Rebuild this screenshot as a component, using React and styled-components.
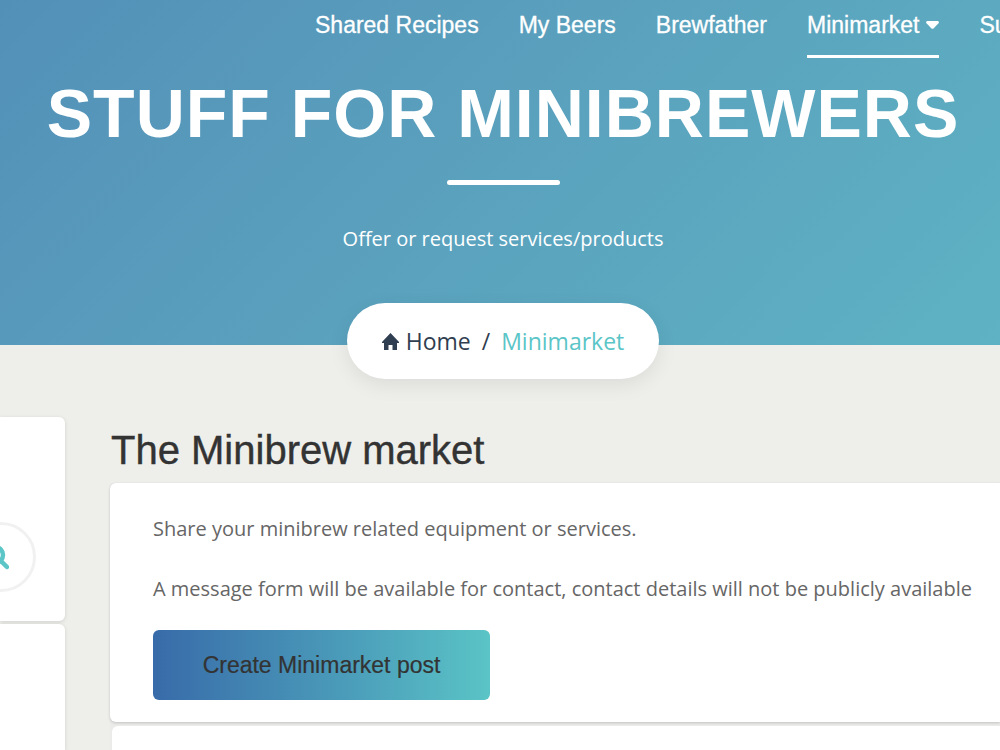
import React from 'react';
import styled, { createGlobalStyle, css } from 'styled-components';

const GlobalStyle = createGlobalStyle`
  *, *::before, *::after { box-sizing: border-box; }
  html, body, #root { height: 100%; }
  body {
    margin: 0;
    background: #eeefeb;
    color: #666;
    font-family: 'Open Sans', 'Noto Sans', sans-serif;
    font-size: 20px;
    line-height: 30px;
    overflow: hidden;
  }
  h1, h2, p, ul, ol { margin: 0; padding: 0; }
  ul, ol { list-style: none; }
`;

const headingFont = css`
  font-family: 'Liberation Sans', Arial, sans-serif;
`;

const Page = styled.div`
  display: flex;
  flex-direction: column;
  height: 100vh;
  overflow: hidden;
`;

const Hero = styled.header`
  display: flex;
  flex-direction: column;
  flex-shrink: 0;
  background: linear-gradient(135deg, #5390b8 0%, #5aa0bd 45%, #5eb2c3 100%);
  color: #fff;
`;

const Nav = styled.nav`
  padding-left: 315px;
  overflow: hidden;
`;

const NavList = styled.ul`
  display: flex;
  gap: 40px;
`;

const NavLink = styled.a`
  ${headingFont}
  display: flex;
  align-items: center;
  gap: 7px;
  height: 58px;
  padding-bottom: 5px;
  border-bottom: 3px solid ${(p) => (p.$active ? '#fff' : 'transparent')};
  color: #fff;
  font-size: 23px;
  line-height: 30px;
  text-decoration: none;
  white-space: nowrap;
  -webkit-text-stroke: 0.3px #fff;
`;

const Caret = styled.svg`
  width: 13px;
  height: 8px;
`;

const Banner = styled.div`
  display: flex;
  flex-direction: column;
  align-items: center;
  padding: 15px 0 49px 6px;
`;

const Title = styled.h1`
  ${headingFont}
  font-size: 68px;
  line-height: 80px;
  font-weight: 700;
  letter-spacing: 1px;
  text-transform: uppercase;
  white-space: nowrap;
`;

const Rule = styled.div`
  width: 113px;
  height: 5px;
  margin: 27px 0 39px;
  border-radius: 3px;
  background: #fff;
`;

const Crumbs = styled.nav`
  display: flex;
  justify-content: center;
  padding-left: 6px;
  margin-bottom: -34px;
`;

const CrumbList = styled.ol`
  display: flex;
  align-items: center;
  height: 76px;
  padding: 0 35px;
  border-radius: 38px;
  background: #fff;
  box-shadow: 0 6px 20px rgba(0, 0, 0, 0.08);
  color: #2f3e50;
  font-size: 23px;
`;

const Crumb = styled.li`
  color: ${(p) => (p.$current ? '#5bc5c7' : 'inherit')};

  li + &::before {
    content: '/';
    padding: 0 11px;
    color: #2f3e50;
  }
`;

const CrumbLink = styled.a`
  display: flex;
  align-items: center;
  gap: 7px;
  color: inherit;
  text-decoration: none;
`;

const HomeIcon = styled.svg`
  width: 17px;
  height: 17px;
`;

const Layout = styled.div`
  display: grid;
  grid-template-columns: 65px minmax(0, 1fr);
  gap: 45px;
  flex: 1;
  min-height: 0;
  padding-top: 72px;
`;

const Sidebar = styled.aside`
  display: flex;
  flex-direction: column;
  gap: 3px;
`;

const SideCard = styled.section`
  display: flex;
  justify-content: flex-end;
  align-items: flex-start;
  height: ${(p) => (p.$search ? '204px' : 'auto')};
  flex: ${(p) => (p.$search ? 'none' : '1')};
  padding: 105px 29px 0 0;
  border-radius: ${(p) => (p.$search ? '0 6px 6px 0' : '0 6px 0 0')};
  background: #fff;
  box-shadow: 0 1px 4px rgba(0, 0, 0, 0.12);
`;

const SearchButton = styled.button`
  display: flex;
  flex-shrink: 0;
  align-items: center;
  justify-content: center;
  width: 70px;
  height: 70px;
  padding: 0 10px 0 0;
  border: 3px solid #f1f1f1;
  border-radius: 35px;
  background: #fff;
  color: #5bc5c7;
`;

const SearchIcon = styled.svg`
  flex-shrink: 0;
  width: 25px;
  height: 25px;
`;

const Main = styled.main`
  display: flex;
  flex-direction: column;
  background: #ebebea;
`;

const Heading = styled.h2`
  ${headingFont}
  padding: 8px 0 8px 1px;
  background: #eeefeb;
  color: #333;
  font-size: 40px;
  line-height: 50px;
  font-weight: 400;
  -webkit-text-stroke: 0.4px #333;
`;

const Card = styled.section`
  padding: 31px 0 22px 43px;
  border-radius: 6px 0 0 6px;
  background: #fff;
  box-shadow: 0 1px 3px rgba(0, 0, 0, 0.18);
  white-space: nowrap;
`;

const Paragraph = styled.p`
  margin-bottom: 30px;
`;

const PostButton = styled.button`
  ${headingFont}
  display: block;
  margin-top: -4px;
  width: 337px;
  height: 70px;
  border: 0;
  border-radius: 6px;
  background: linear-gradient(90deg, #386ba9, #4a9ab9 55%, #5ac4c6);
  color: #333;
  font-size: 23px;
  -webkit-text-stroke: 0.2px #333;
`;

const ListCard = styled.section`
  flex: 1;
  margin: 4px 0 0 2px;
  border-radius: 6px 0 0 0;
  background: #fff;
`;

const links = [
  { label: 'Shared Recipes' },
  { label: 'My Beers' },
  { label: 'Brewfather' },
  { label: 'Minimarket', active: true },
  { label: 'Support' },
];

export default function App() {
  return (
    <Page>
      <GlobalStyle />
      <Hero>
        <Nav aria-label="Main">
          <NavList>
            {links.map(({ label, active }) => (
              <li key={label}>
                <NavLink href="#" $active={active}>
                  {label}
                  {active && (
                    <Caret viewBox="0 0 13 8" aria-hidden="true">
                      <path d="M1.5 0h10c1.2 0 1.8 1.3 1 2.2L7.5 7.4c-.6.6-1.4.6-2 0L.5 2.2C-.3 1.300.3 0 1.5 0Z" fill="currentColor" />
                    </Caret>
                  )}
                </NavLink>
              </li>
            ))}
          </NavList>
        </Nav>
        <Banner>
          <Title>Stuff for Minibrewers</Title>
          <Rule />
          <p>Offer or request services/products</p>
        </Banner>
        <Crumbs aria-label="Breadcrumb">
          <CrumbList>
            <Crumb>
              <CrumbLink href="#">
                <HomeIcon viewBox="0 0 17 17" aria-hidden="true">
                  <path d="M8.5 0 17 9v1h-2v7h-4.500v-5h-4v5H2v-7H0V9Z" fill="currentColor" />
                </HomeIcon>
                Home
              </CrumbLink>
            </Crumb>
            <Crumb $current aria-current="page">Minimarket</Crumb>
          </CrumbList>
        </Crumbs>
      </Hero>
      <Layout>
        <Sidebar>
          <SideCard $search>
            <SearchButton type="button" aria-label="Search">
              <SearchIcon viewBox="0 0 25 25" fill="none" stroke="currentColor" strokeWidth="4.500" strokeLinecap="round" aria-hidden="true">
                <circle cx="11" cy="10" r="8" />
                <path d="m17 16 6 6" />
              </SearchIcon>
            </SearchButton>
          </SideCard>
          <SideCard />
        </Sidebar>
        <Main>
          <Heading>The Minibrew market</Heading>
          <Card>
            <Paragraph>Share your minibrew related equipment or services.</Paragraph>
            <Paragraph>A message form will be available for contact, contact details will not be publicly available</Paragraph>
            <PostButton type="button">Create Minimarket post</PostButton>
          </Card>
          <ListCard />
        </Main>
      </Layout>
    </Page>
  );
}
